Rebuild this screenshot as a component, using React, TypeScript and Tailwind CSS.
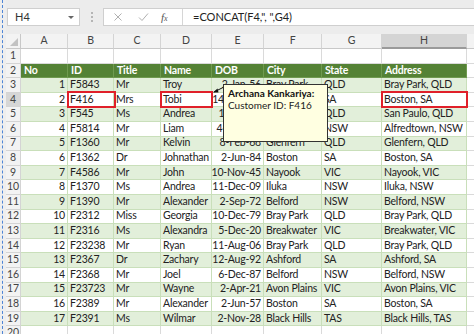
import React from 'react';

const widths = ['w-[15px]', 'w-[47px]', 'w-[46px]', 'w-[47px]', 'w-[51px]', 'w-[52px]', 'w-[58px]', 'w-[60px]', 'w-[85px]', 'w-[40px]'];
const letters = ['A', 'B', 'C', 'D', 'E', 'F', 'G', 'H', 'I'];

const heads = ['No', 'ID', 'Title', 'Name', 'DOB', 'City', 'State', 'Address'];

const data: string[][] = [
  ['1', 'F5843', 'Mr', 'Troy', '2-Jan-56', 'Bray Park', 'QLD', 'Bray Park, QLD'],
  ['2', 'F416', 'Mrs', 'Tobi', '14-Mar-91', 'Boston', 'SA', 'Boston, SA'],
  ['3', 'F545', 'Ms', 'Andrea', '11-Jul-93', 'San Paulo', 'QLD', 'San Paulo, QLD'],
  ['4', 'F5814', 'Mr', 'Liam', '4-May-77', 'Alfredtown', 'NSW', 'Alfredtown, NSW'],
  ['5', 'F1360', 'Mr', 'Kelvin', '8-Feb-68', 'Glenfern', 'QLD', 'Glenfern, QLD'],
  ['6', 'F1362', 'Dr', 'Johnathan', '2-Jun-84', 'Boston', 'SA', 'Boston, SA'],
  ['7', 'F4586', 'Mr', 'John', '10-Nov-45', 'Nayook', 'VIC', 'Nayook, VIC'],
  ['8', 'F1370', 'Ms', 'Andrea', '11-Dec-09', 'Iluka', 'NSW', 'Iluka, NSW'],
  ['9', 'F1390', 'Mr', 'Alexander', '2-Sep-72', 'Belford', 'NSW', 'Belford, NSW'],
  ['10', 'F2312', 'Miss', 'Georgia', '10-Dec-79', 'Bray Park', 'QLD', 'Bray Park, QLD'],
  ['11', 'F2316', 'Ms', 'Alexandra', '5-Dec-20', 'Breakwater', 'VIC', 'Breakwater, VIC'],
  ['12', 'F23238', 'Mr', 'Ryan', '11-Aug-06', 'Bray Park', 'QLD', 'Bray Park, QLD'],
  ['13', 'F2367', 'Dr', 'Zachary', '12-Aug-92', 'Ashford', 'SA', 'Ashford, SA'],
  ['14', 'F2368', 'Mr', 'Joel', '6-Dec-87', 'Belford', 'NSW', 'Belford, NSW'],
  ['15', 'F23723', 'Mr', 'Wayne', '2-Apr-21', 'Avon Plains', 'VIC', 'Avon Plains, VIC'],
  ['16', 'F2389', 'Mr', 'Alexander', '2-Jun-57', 'Boston', 'SA', 'Boston, SA'],
  ['17', 'F2391', 'Ms', 'Wilmar', '2-Nov-28', 'Black Hills', 'TAS', 'Black Hills, TAS'],
];

function RowHead({ n, active }: { n: number; active?: boolean }) {
  return (
    <div
      className={`${widths[0]} shrink-0 h-full flex items-center justify-center border-r border-b border-[#d4d4d4] text-[#444] ${
        active ? 'bg-[#d6d6d6]' : 'bg-[#f3f3f3]'
      }`}
    >
      {n}
    </div>
  );
}

function EmptyRow({ n }: { n: number }) {
  return (
    <div className="flex h-[14.6px]">
      <RowHead n={n} />
      {widths.slice(1).map((w, i) => (
        <div key={i} className={`${w} shrink-0 h-full bg-white border-r border-b border-[#dadada]`} />
      ))}
    </div>
  );
}

export default function App() {
  return (
    <div className="relative w-[474px] h-[334px] overflow-hidden bg-[#eeeeee] flex font-['Lato',sans-serif] text-[10.5px] tracking-[-0.2px] text-[#222]">
      <div className="w-[6px] shrink-0 pl-[2px]">
        <div className="h-full border-l border-dashed border-[#4f86d6]" />
      </div>

      <div className="flex-1 flex flex-col min-w-0">
        {/* formula bar */}
        <div className="h-[34px] shrink-0 flex items-start pt-[8px] bg-[#ececec] text-[11px] tracking-normal">
          <div className="ml-[1px] w-[73px] h-[18px] bg-white border border-[#cfcfcf] flex items-center justify-between pl-[7px] pr-[5px] text-[#333]">
            <span>H4</span>
            <span className="w-0 h-0 border-l-[3px] border-r-[3px] border-t-[3px] border-l-transparent border-r-transparent border-t-[#666]" />
          </div>
          <div className="w-[23px] h-[18px] flex flex-col items-center justify-center gap-[2px]">
            <span className="w-[2px] h-[2px] bg-[#b5b5b5]" />
            <span className="w-[2px] h-[2px] bg-[#b5b5b5]" />
            <span className="w-[2px] h-[2px] bg-[#b5b5b5]" />
          </div>
          <div className="flex-1 h-[18px] bg-white border border-[#cfcfcf] border-r-0 flex items-center">
            <div className="w-[79px] h-full flex items-center border-r border-[#d6d6d6] shrink-0">
              <svg width="10" height="10" viewBox="0 0 10 10" className="ml-[9px]">
                <path d="M1.5 1.5 L8.5 8.5 M8.5 1.5 L1.5 8.5" stroke="#b0b0b0" strokeWidth="1" />
              </svg>
              <svg width="11" height="10" viewBox="0 0 11 10" className="ml-[15px]">
                <path d="M1 5.5 L4 8.5 L10 1.5" stroke="#b0b0b0" strokeWidth="1" fill="none" />
              </svg>
              <span className="ml-[12px] italic font-['Liberation_Serif',serif] text-[11px] text-[#555]">
                f<span className="text-[8px]">x</span>
              </span>
            </div>
            <span className="ml-[10px] text-[#222]">=CONCAT(F4,", ",G4)</span>
          </div>
        </div>

        {/* column letters */}
        <div className="flex h-[15px] shrink-0 bg-[#f3f3f3]">
          <div className={`${widths[0]} shrink-0 h-full relative border-r border-b border-[#c8c8c8]`}>
            <svg className="absolute right-[2px] bottom-[2px]" width="8" height="8" viewBox="0 0 8 8">
              <path d="M8 0 L8 8 L0 8 Z" fill="#c2c2c2" />
            </svg>
          </div>
          {letters.map((l, i) => (
            <div
              key={l}
              className={`${widths[i + 1]} shrink-0 h-full flex items-center justify-center border-r border-[#d4d4d4] text-[#444] ${
                l === 'H' ? 'bg-[#d4d4d4] border-b-2 border-b-[#9a9a9a]' : 'border-b border-b-[#c8c8c8]'
              }`}
            >
              {l}
            </div>
          ))}
        </div>

        <EmptyRow n={1} />

        {/* table header */}
        <div className="flex h-[14.6px]">
          <RowHead n={2} />
          {heads.map((h, i) => (
            <div
              key={h}
              className={`${widths[i + 1]} shrink-0 h-full flex items-center pl-[3px] bg-[#548235] text-white font-bold border-r border-b border-[#6f9a4f]`}
            >
              {h}
            </div>
          ))}
          <div className={`${widths[9]} shrink-0 h-full bg-white border-b border-[#dadada]`} />
        </div>

        {data.map((r, ri) => {
          const green = ri % 2 === 0;
          return (
            <div key={ri} className="flex h-[14.6px]">
              <RowHead n={ri + 3} active={ri === 1} />
              {r.map((c, ci) => {
                const right = ci === 0 || ci === 4;
                return (
                  <div
                    key={ci}
                    className={`${widths[ci + 1]} shrink-0 h-full flex items-center whitespace-nowrap border-r border-b border-[#c9dfba] ${
                      right ? 'justify-end pr-[2px]' : 'pl-[2px]'
                    } ${green ? 'bg-[#e2efda]' : 'bg-white'}`}
                  >
                    {c}
                  </div>
                );
              })}
              <div className={`${widths[9]} shrink-0 h-full bg-white border-b border-[#dadada]`} />
            </div>
          );
        })}

        <EmptyRow n={20} />
      </div>

      {/* red annotation boxes */}
      <div className="absolute left-[67px] top-[91px] w-[49px] h-[17px] border-2 border-[#e0202a]" />
      <div className="absolute left-[160px] top-[91px] w-[53px] h-[17px] border-2 border-[#e0202a]" />
      <div className="absolute left-[381px] top-[91px] w-[87px] h-[17px] border-2 border-[#e0202a]" />

      {/* comment arrow */}
      <svg className="absolute left-[205px] top-[80px]" width="30" height="20" viewBox="0 0 30 20">
        <path d="M21 6 L9 12" stroke="#111" strokeWidth="1" />
        <path d="M8 12.5 L12.5 8.5 L13.5 12.5 Z" fill="#111" />
      </svg>

      {/* comment */}
      <div className="absolute left-[223px] top-[84px] w-[105px] h-[58px] bg-[#ffffe1] border border-[#333] pl-[4px] pt-[2px] leading-[12px] text-[10px] tracking-normal">
        <div className="font-bold text-[#111]">Archana Kankariya:</div>
        <div className="text-[#222]">Customer ID: F416</div>
      </div>
    </div>
  );
}
